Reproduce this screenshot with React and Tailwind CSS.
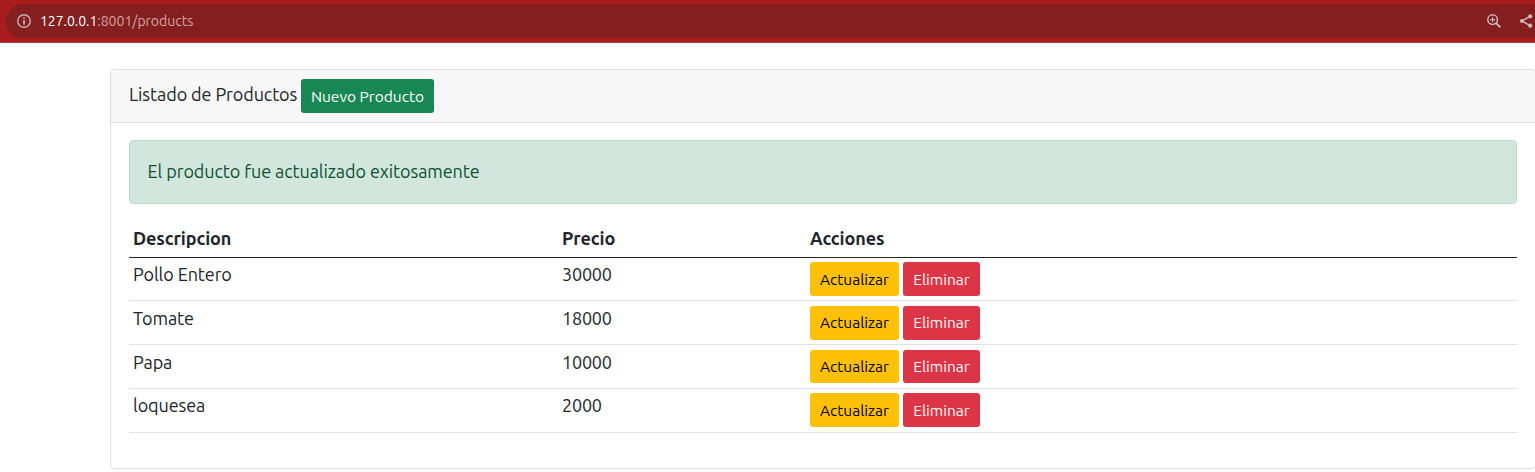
import React from 'react';

const products = [
  { name: 'Pollo Entero', price: '30000', row: 'h-[43px]', text: 'pt-[3px]', actions: 'pt-1', button: 'h-[34px] pt-px' },
  { name: 'Tomate', price: '18000', row: 'h-11', text: 'pt-1', actions: 'pt-[5px]', button: 'h-[34px]' },
  { name: 'Papa', price: '10000', row: 'h-11', text: 'pt-1', actions: 'pt-[5px]', button: 'h-[33px]' },
  { name: 'loquesea', price: '2000', row: 'h-11', text: 'pt-[3px]', actions: 'pt-1', button: 'h-[34px] pt-px' },
];

function InfoIcon() {
  return (
    <svg viewBox="0 0 16 16" className="size-4 shrink-0 text-[#c6b0b0]" fill="none" stroke="currentColor">
      <circle cx="8" cy="8" r="6.25" strokeWidth="1.4" />
      <path d="M8 4.2v1.6M8 7v4.6" strokeWidth="1.8" />
    </svg>
  );
}

function ZoomInIcon() {
  return (
    <svg viewBox="0 0 16 16" className="ml-auto size-4 shrink-0 text-[#ccb8b8]" fill="none" stroke="currentColor">
      <circle cx="6.6" cy="6.6" r="4.8" strokeWidth="1.5" />
      <path d="M10.2 10.2l4.1 4.1" strokeWidth="1.9" />
      <path d="M6.6 4.2v4.8M4.2 6.6H9" strokeWidth="1.2" />
    </svg>
  );
}

function ShareIcon() {
  return (
    <svg viewBox="0 0 16 16" className="mr-px ml-4 size-4 shrink-0 text-[#ccb8b8]" fill="currentColor" stroke="currentColor">
      <path d="M12.2 3.2L4 8l8.2 4.8" fill="none" strokeWidth="1.4" />
      <g stroke="none">
        <circle cx="12.2" cy="3.3" r="2.1" />
        <circle cx="4" cy="8" r="2.1" />
        <circle cx="12.2" cy="12.7" r="2.1" />
      </g>
    </svg>
  );
}

function AddressBar() {
  return (
    <div className="flex h-[43px] border-b border-[#b73b3c] bg-[#a81c1e] pt-1 pl-1.5">
      <div className="flex h-[34px] flex-1 items-center rounded-l-full bg-[#841e1f] pl-2.5 text-[14px] text-[#d5a5a5]">
        <InfoIcon />
        <span className="ml-2 tracking-[-0.05px] text-white">127.0.0.1</span>
        <span className="tracking-normal">:8001/products</span>
        <ZoomInIcon />
        <ShareIcon />
      </div>
    </div>
  );
}

export default function App() {
  return (
    <div className="h-[472px] overflow-hidden bg-white font-['Ubuntu','Noto_Sans',sans-serif] text-[18px] leading-[26px] tracking-[-0.09px] text-[#212529]">
      <AddressBar />
      <main className="mt-[26px] ml-[110px] h-[400px] w-[1426px] rounded-[4px] border border-[#dfdfdf] bg-white">
        <header className="flex h-[53px] items-start rounded-t-[3px] border-b border-[#dfdfdf] bg-[#f7f7f7] pt-[9px] pl-[18px]">
          <h1 className="mt-[2px] w-[172px] whitespace-nowrap">Listado de Productos</h1>
          <button className="h-[34px] w-[133px] rounded-[3px] bg-[#198754] pt-px text-[15.5px] tracking-normal text-white">Nuevo Producto</button>
        </header>
        <div className="px-[18px] pt-[17px]">
          <div className="flex h-16 items-center rounded-[4px] border border-[#badbcc] bg-[#d1e7dd] pb-[3px] pl-[17.6px] text-[#0f5132]">
            El producto fue actualizado exitosamente
          </div>
          <div className="mt-[18px] grid h-9 grid-cols-[429px_248px_1fr] border-b border-[#212529] pt-[3px] font-bold">
            <div className="pl-1">Descripcion</div>
            <div className="pl-1">Precio</div>
            <div className="pl-1">Acciones</div>
          </div>
          {products.map((p) => (
            <div key={p.name} className={`grid grid-cols-[429px_248px_1fr] border-b border-[#dee2e6] ${p.row}`}>
              <div className={`pl-1 ${p.text}`}>{p.name}</div>
              <div className={`pl-1 tracking-[-0.2px] ${p.text}`}>{p.price}</div>
              <div className={`flex items-start gap-1 pl-1 text-[15.5px] tracking-normal ${p.actions}`}>
                <button className={`w-[89px] rounded-[3px] bg-[#ffc107] text-black ${p.button}`}>Actualizar</button>
                <button className={`w-[77px] rounded-[3px] bg-[#dc3545] text-white ${p.button}`}>Eliminar</button>
              </div>
            </div>
          ))}
        </div>
      </main>
    </div>
  );
}
